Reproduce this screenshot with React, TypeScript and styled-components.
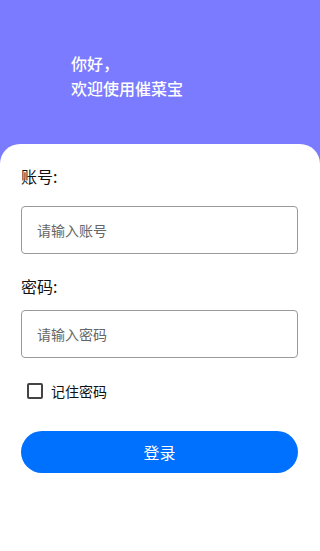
import styled, { createGlobalStyle } from 'styled-components';

const GlobalStyle = createGlobalStyle`
  html, body {
    margin: 0;
    padding: 0;
    background: #7b7bff;
  }
  body {
    font-family: "Noto Sans CJK SC", "Noto Sans", sans-serif;
  }
`;

const Page = styled.div`
  display: flex;
  flex-direction: column;
  height: 551px;
  width: 320px;
  background: #7b7bff;
`;

const Header = styled.div`
  box-sizing: border-box;
  height: 144px;
  padding: 51px 0 0 71px;
`;

const Greeting = styled.p`
  color: #ffffff;
  font-size: 16px;
  font-weight: 500;
  line-height: 25px;
  margin: 0;
`;

const Card = styled.div`
  background: #ffffff;
  border-radius: 20px 20px 0 0;
  box-sizing: border-box;
  display: flex;
  flex: 1;
  flex-direction: column;
  padding: 20px 21px 0 21px;
`;

const Label = styled.label<{ $gap: number }>`
  color: #111111;
  font-size: 16px;
  line-height: 24px;
  margin-bottom: ${(p) => p.$gap}px;
`;

const Input = styled.input<{ $gap: number }>`
  border: 1px solid #999999;
  border-radius: 4px;
  box-sizing: border-box;
  color: #333333;
  font-family: inherit;
  font-size: 14px;
  height: 48px;
  margin-bottom: ${(p) => p.$gap}px;
  outline: none;
  padding: 0 15px;
  width: 277px;

  &::placeholder {
    color: #666666;
  }
`;

const Remember = styled.label`
  align-items: center;
  color: #111111;
  display: flex;
  font-size: 14px;
  gap: 8px;
  height: 26px;
  margin: 20px 0 0 6px;
`;

const Box = styled.span`
  border: 2px solid #444444;
  border-radius: 2px;
  box-sizing: border-box;
  display: inline-block;
  height: 16px;
  width: 16px;
`;

const Button = styled.button`
  background: #0070ff;
  border: none;
  border-radius: 21px;
  color: #ffffff;
  font-family: inherit;
  font-size: 16px;
  height: 42px;
  margin-top: 27px;
  width: 277px;
`;

export default function App() {
  return (
    <Page>
      <GlobalStyle />
      <Header>
        <Greeting>你好，</Greeting>
        <Greeting>欢迎使用催菜宝</Greeting>
      </Header>
      <Card>
        <Label $gap={18}>账号:</Label>
        <Input $gap={20} placeholder="请输入账号" />
        <Label $gap={12}>密码:</Label>
        <Input $gap={0} type="password" placeholder="请输入密码" />
        <Remember>
          <Box />
          记住密码
        </Remember>
        <Button>登录</Button>
      </Card>
    </Page>
  );
}
